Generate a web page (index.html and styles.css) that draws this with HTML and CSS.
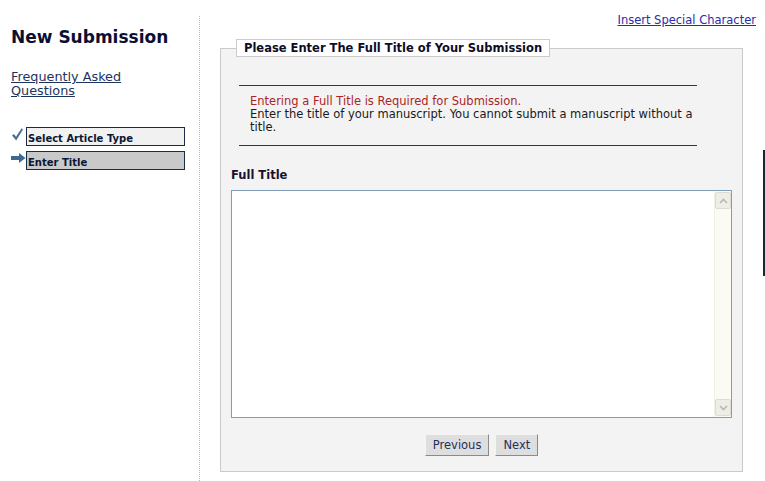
FILE: index.html
```html
<!DOCTYPE html>
<html lang="en">
<head>
    <meta charset="UTF-8">
    <title>New Submission</title>
    <link rel="stylesheet" href="styles.css">
</head>
<body>
    <div class="page">
        <div class="sidebar">
            <h1>New Submission</h1>
            <a href="#" class="faq">Frequently Asked Questions</a>
            <ul class="steps">
                <li class="step done">
                    <span class="step-icon">
                        <svg width="11" height="13" viewBox="0 0 11 13"><path d="M0 7.5 L2 6 L4 8.8 L9.6 0.3 L11 1.4 L4.2 12.6 Z" fill="#4a7099"/></svg>
                    </span>
                    <span class="step-label">Select Article Type</span>
                </li>
                <li class="step current">
                    <span class="step-icon">
                        <svg width="15" height="11" viewBox="0 0 15 11"><path d="M0 3 H8 V0 L14.5 5 L8 10 V7 H0 Z" fill="#3d6993"/></svg>
                    </span>
                    <span class="step-label">Enter Title</span>
                </li>
            </ul>
        </div>

        <div class="content">
            <div class="tools">
                <a href="#">Insert Special Character</a>
            </div>

            <fieldset class="panel">
                <legend>Please Enter The Full Title of Your Submission</legend>

                <div class="notice">
                    <p class="notice-required">Entering a Full Title is Required for Submission.</p>
                    <p>Enter the title of your manuscript. You cannot submit a manuscript without a title.</p>
                </div>

                <label for="title" class="field-label">Full Title</label>
                <div class="textbox">
                    <textarea id="title" name="title"></textarea>
                    <div class="scrollbar">
                        <span class="sb-btn">
                            <svg width="9" height="6" viewBox="0 0 9 6"><path d="M1 5 L4.5 1.5 L8 5" fill="none" stroke="#b9b9ad" stroke-width="1.6"/></svg>
                        </span>
                        <span class="sb-track"></span>
                        <span class="sb-btn">
                            <svg width="9" height="6" viewBox="0 0 9 6"><path d="M1 1 L4.5 4.5 L8 1" fill="none" stroke="#b9b9ad" stroke-width="1.6"/></svg>
                        </span>
                    </div>
                </div>

                <div class="actions">
                    <button type="button" class="btn">Previous</button>
                    <button type="button" class="btn">Next</button>
                </div>
            </fieldset>
        </div>
    </div>
    <div class="edge-line"></div>
</body>
</html>
```

FILE: styles.css
```css
body {
    margin: 0;
    background-color: #fff;
    font-family: "DejaVu Sans", Verdana, sans-serif;
    font-size: 11.5px;
    color: #1a1a1a;
}
.page {
    display: flex;
    min-height: 481px;
}
.sidebar {
    width: 188px;
    margin-top: 16px;
    padding-left: 11px;
    border-right: 1px dotted #b8b8b8;
}
.sidebar h1 {
    margin: 10px 0 0;
    font-size: 17px;
    line-height: 22px;
    color: #0b0f33;
}
.sidebar .faq {
    display: block;
    margin-top: 22px;
    width: 150px;
    font-size: 12.8px;
    line-height: 14px;
    color: #1d3461;
}
.steps {
    list-style: none;
    margin: 29px 0 0;
    padding: 0;
}
.step {
    display: flex;
    margin-bottom: 5px;
}
.step-icon {
    width: 15px;
    display: flex;
    justify-content: flex-start;
}
.done .step-icon {
    padding-left: 1px;
    width: 14px;
    margin-top: 1px;
}
.current .step-icon {
    margin-top: 2px;
}
.step-label {
    width: 156px;
    height: 13px;
    padding: 4px 0 0 1px;
    border: 1px solid #1a2b47;
    font-size: 10px;
    font-weight: bold;
    line-height: 13px;
    color: #0b1733;
}
.done .step-label {
    background-color: #f1f1f1;
}
.current .step-label {
    background-color: #c9c9c9;
}
.content {
    flex: 1;
}
.tools {
    padding: 14px 9px 0 0;
    text-align: right;
    line-height: 13px;
}
.tools a {
    color: #2c2ca8;
}
.panel {
    margin: 12px 22px 0 20px;
    padding: 0 10px 15px 10px;
    border: 1px solid #cacaca;
    background-color: #f3f3f3;
}
.panel legend {
    margin-left: 5px;
    padding: 0 7px;
    border: 1px solid #cccccc;
    background-color: #fff;
    font-weight: bold;
    line-height: 16px;
    color: #0d0d26;
}
.notice {
    width: 445px;
    margin: 28px 0 0 8px;
    padding: 9px 2px 11px 11px;
    border-top: 1px solid #b80000;
    border-bottom: 1px solid #b80000;
    line-height: 13px;
}
.notice p {
    margin: 0;
}
.notice .notice-required {
    color: #a82626;
}
.field-label {
    display: block;
    margin-top: 21px;
    font-weight: bold;
    line-height: 16px;
    color: #1a1030;
}
.textbox {
    display: flex;
    height: 226px;
    margin-top: 7px;
    border: 1px solid #7f9db9;
    background-color: #fff;
}
.textbox textarea {
    flex: 1;
    margin: 0;
    padding: 2px;
    border: none;
    resize: none;
    outline: none;
    font-family: inherit;
    font-size: 12px;
}
.scrollbar {
    width: 16px;
    display: flex;
    flex-direction: column;
    background-color: #fbfbf3;
    border-left: 1px solid #f0f0e6;
}
.sb-btn {
    height: 15px;
    margin: 1px 0;
    display: flex;
    align-items: center;
    justify-content: center;
    border: 1px solid #dedcd2;
    border-radius: 2px;
    background-color: #eeede6;
}
.sb-track {
    flex: 1;
}
.actions {
    display: flex;
    justify-content: center;
    gap: 6px;
    margin-top: 16px;
}
.btn {
    height: 22px;
    padding: 0 7px;
    border: 1px solid;
    border-color: #f4f4f4 #8a8a8a #8a8a8a #f4f4f4;
    background-color: #dedede;
    font-family: inherit;
    font-size: 11.5px;
    color: #1e2f5c;
    cursor: pointer;
}
.edge-line {
    position: absolute;
    left: 763px;
    top: 150px;
    width: 2px;
    height: 126px;
    background-color: #1c2536;
}
```
